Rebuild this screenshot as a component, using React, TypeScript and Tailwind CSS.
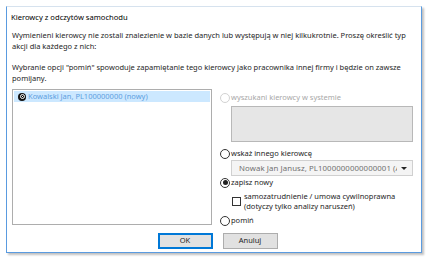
import React from "react";

const font = { fontFamily: '"Noto Sans", "Liberation Sans", sans-serif' };

function Radio({ checked = false, disabled = false }: { checked?: boolean; disabled?: boolean }) {
  return (
    <span
      className={
        "flex items-center justify-center w-[10px] h-[10px] rounded-full border bg-white shrink-0 " +
        (disabled ? "border-[#d2d2d2]" : "border-[#333]")
      }
    >
      {checked && <span className="w-[5px] h-[5px] rounded-full bg-[#222]" />}
    </span>
  );
}

export default function App() {
  return (
    <div className="w-[428px] h-[260px] bg-white pt-[6px] pl-[6px]" style={font}>
      <div className="w-[416px] h-[247px] bg-white border border-[#5a9be0] border-t-[#d6e2ee] shadow-[2px_2px_2px_rgba(0,0,0,0.25)] flex flex-col text-[#1e1e1e] text-[7.5px]">
        <div className="h-[21px] pl-[4px] pt-[3px] text-[7.6px] leading-[14px] text-black">
          Kierowcy z odczytów samochodu
        </div>
        <div className="px-[5px] leading-[11px]">
          <p className="mt-[2px]">
            Wymienieni kierowcy nie zostali znalezienie w bazie danych lub występują w niej kilkukrotnie. Proszę określić typ akcji dla każdego z nich:
          </p>
          <p className="mt-[10px]">
            Wybranie opcji "pomiń" spowoduje zapamiętanie tego kierowcy jako pracownika innej firmy i będzie on zawsze pomijany.
          </p>
        </div>
        <div className="flex mt-[5px] pl-[5px]">
          <div className="w-[200px] h-[136px] border border-[#adadad] bg-white pt-[1px] px-[1px] flex flex-col">
            <div className="h-[11px] bg-[#cce8ff] flex items-center pl-[4px] leading-[11px] text-[#5e9ee0]">
              <span className="w-[8px] h-[8px] rounded-full bg-[#111] flex items-center justify-center shrink-0">
                <span className="w-[5px] h-[5px] rounded-full border border-white flex items-center justify-center">
                  <span className="w-[1px] h-[1px] bg-white" />
                </span>
              </span>
              <span className="ml-[2px]">Kowalski Jan, PL100000000 (nowy)</span>
            </div>
          </div>
          <div className="ml-[8px] flex flex-col leading-[11px]">
            <div className="flex items-center gap-[1px] mt-[3px] h-[11px] text-[#a8a8a8]">
              <Radio disabled />
              <span>wyszukani kierowcy w systemie</span>
            </div>
            <div className="ml-[11px] mt-[3px] w-[182px] h-[36px] bg-[#e6e6e6] border border-[#b8b8b8]" />
            <div className="flex items-center gap-[1px] mt-[6px] h-[11px] text-[#1e1e1e]">
              <Radio />
              <span>wskaż innego kierowcę</span>
            </div>
            <div className="ml-[11px] mt-[1px] w-[182px] h-[16px] bg-[#f4f4f4] border border-[#d0d0d0] flex items-center pl-[7px] pr-[5px] text-[#707070]">
              <span className="flex-1 whitespace-nowrap overflow-hidden text-[7.8px] tracking-[0.1px]">Nowak Jan Janusz, PL1000000000000001 (A&amp;</span>
              <span className="ml-[4px] w-0 h-0 border-l-[3px] border-r-[3px] border-t-[3px] border-l-transparent border-r-transparent border-t-[#222]" />
            </div>
            <div className="flex items-center gap-[1px] mt-[1px] h-[11px] text-[#1e1e1e]">
              <Radio checked />
              <span>zapisz nowy</span>
            </div>
            <div className="flex items-center ml-[12px] mt-[3px] text-[#1e1e1e]">
              <span className="w-[9px] h-[9px] border border-[#333] bg-white shrink-0 mt-[1px]" />
              <span className="ml-[3px] leading-[10px]">
                samozatrudnienie / umowa cywilnoprawna
                <br />
                (dotyczy tylko analizy naruszeń)
              </span>
            </div>
            <div className="flex items-center gap-[1px] mt-[4px] h-[11px] text-[#1e1e1e]">
              <Radio />
              <span>pomiń</span>
            </div>
          </div>
        </div>
        <div className="flex justify-center gap-[10px] mt-[7px] pl-[7px]">
          <div className="w-[55px] h-[16px] bg-[#e1e1e1] border-2 border-[#0078d7] flex items-center justify-center text-[#1e1e1e]">
            OK
          </div>
          <div className="w-[55px] h-[16px] bg-[#e1e1e1] border border-[#adadad] flex items-center justify-center text-[#1e1e1e]">
            Anuluj
          </div>
        </div>
      </div>
    </div>
  );
}
